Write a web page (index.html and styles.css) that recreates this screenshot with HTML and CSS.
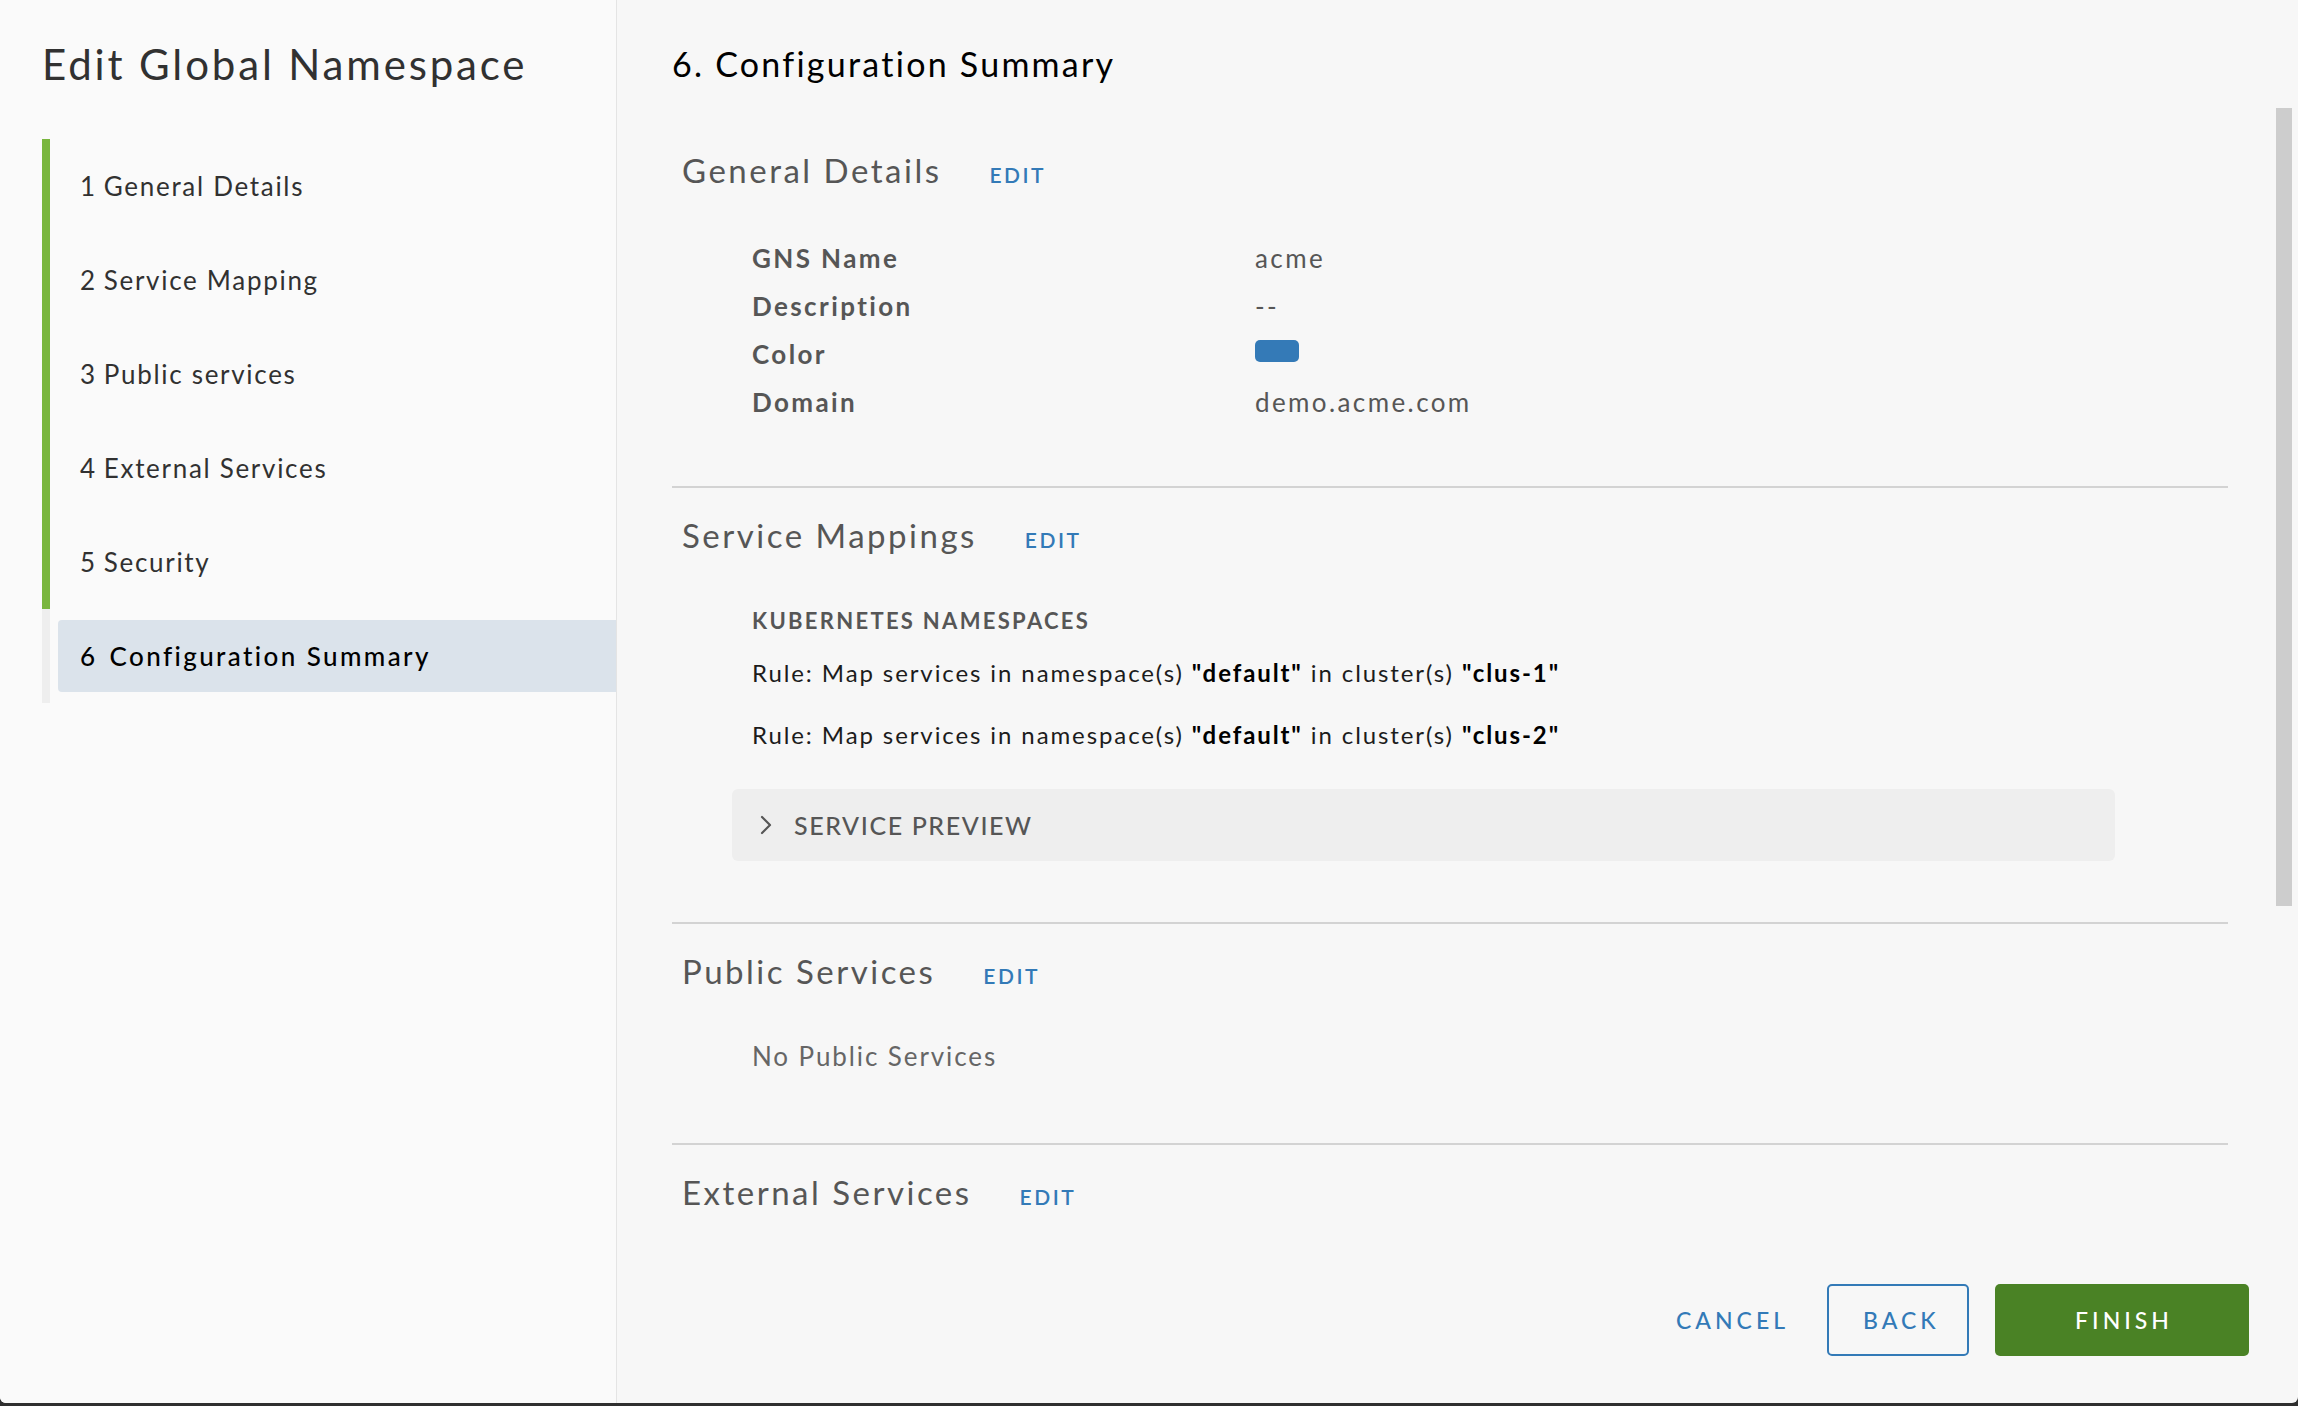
FILE: index.html
```html
<!DOCTYPE html>
<html lang="en">
<head>
<meta charset="utf-8">
<title>Edit Global Namespace</title>
<link rel="stylesheet" href="styles.css">
</head>
<body>
<div class="modal">
  <aside class="sidebar">
    <h1 class="wiz-title">Edit Global Namespace</h1>
    <ol class="steps">
      <li class="step done"><span class="num">1</span>General Details</li>
      <li class="step done"><span class="num">2</span>Service Mapping</li>
      <li class="step done"><span class="num">3</span>Public services</li>
      <li class="step done"><span class="num">4</span>External Services</li>
      <li class="step done"><span class="num">5</span>Security</li>
      <li class="step active"><div class="step-box"><span class="num">6</span>Configuration Summary</div></li>
    </ol>
  </aside>
  <main class="main">
    <div class="scroll">
      <h2 class="page-title">6. Configuration Summary</h2>

      <section class="sec first">
        <div class="sec-head"><h3 class="sec-title">General Details</h3><a class="edit">EDIT</a></div>
        <div class="kv">
          <div class="kv-row"><span class="kv-label">GNS Name</span><span class="kv-value">acme</span></div>
          <div class="kv-row"><span class="kv-label">Description</span><span class="kv-value">--</span></div>
          <div class="kv-row"><span class="kv-label">Color</span><span class="swatch"></span></div>
          <div class="kv-row"><span class="kv-label">Domain</span><span class="kv-value">demo.acme.com</span></div>
        </div>
      </section>

      <section class="sec sm">
        <div class="sec-head"><h3 class="sec-title">Service Mappings</h3><a class="edit">EDIT</a></div>
        <div class="sub-title">KUBERNETES NAMESPACES</div>
        <p class="rule">Rule: Map services in namespace(s) <b>"default"</b> in cluster(s) <b>"clus-1"</b></p>
        <p class="rule">Rule: Map services in namespace(s) <b>"default"</b> in cluster(s) <b>"clus-2"</b></p>
        <div class="preview">
          <svg class="chev" width="14" height="20" viewBox="0 0 14 20"><path d="M3 2 L11 10 L3 18" fill="none" stroke="#565656" stroke-width="2.2" stroke-linecap="round" stroke-linejoin="round"/></svg>
          <span class="preview-text">SERVICE PREVIEW</span>
        </div>
      </section>

      <section class="sec ps">
        <div class="sec-head"><h3 class="sec-title">Public Services</h3><a class="edit">EDIT</a></div>
        <p class="empty">No Public Services</p>
      </section>

      <section class="sec es">
        <div class="sec-head"><h3 class="sec-title">External Services</h3><a class="edit">EDIT</a></div>
      </section>
    </div>
    <div class="thumb"></div>
    <footer class="footer">
      <button class="btn btn-flat">CANCEL</button>
      <button class="btn btn-outline">BACK</button>
      <button class="btn btn-primary">FINISH</button>
    </footer>
  </main>
</div>
</body>
</html>
```

FILE: styles.css
```css
* { box-sizing: border-box; }
html, body { margin: 0; padding: 0; }
body {
  background: #2f2f2f;
  font-family: Lato, "Open Sans", sans-serif;
  width: 2298px;
  height: 1406px;
  overflow: hidden;
}
.modal {
  display: flex;
  height: 1403px;
  background: #f7f7f7;
  border-radius: 0 0 6px 6px;
  overflow: hidden;
}
.sidebar {
  width: 617px;
  flex: none;
  background: #fafafa;
  border-right: 1px solid #e4e4e4;
  padding: 39px 0 0 42px;
}
.wiz-title {
  margin: 0;
  font-size: 42px;
  line-height: 50px;
  font-weight: 400;
  color: #313131;
  letter-spacing: 2.85px;
}
.steps {
  list-style: none;
  margin: 50px 0 0 0;
  padding: 0;
}
.step {
  height: 94px;
  display: flex;
  align-items: center;
  font-size: 26px;
  letter-spacing: 1.7px;
  color: #313131;
  border-left: 8px solid #eeeeee;
}
.step.done {
  border-left-color: #79b63e;
  padding-left: 30px;
}
.num { margin-right: 7px; }
.step.active {
  padding: 11px 0 11px 8px;
  align-items: stretch;
}
.step-box {
  flex: 1;
  display: flex;
  align-items: center;
  background: #dbe3eb;
  border-radius: 4px 0 0 4px;
  padding-left: 22px;
  color: #000;
  font-weight: 500;
  letter-spacing: 2.4px;
}
.step-box .num { margin-right: 12px; }
.main {
  flex: 1;
  position: relative;
  display: flex;
  flex-direction: column;
}
.scroll {
  height: 1250px;
  overflow: hidden;
  padding: 44px 70px 0 55px;
}
.page-title {
  margin: 0;
  font-size: 34px;
  line-height: 40px;
  font-weight: 400;
  letter-spacing: 2.25px;
  color: #000;
}
.sec {
  border-top: 2px solid #d3d3d3;
  padding-top: 27px;
}
.sec.first {
  border-top: 0;
  margin-top: 66px;
  padding-top: 0;
  padding-bottom: 60px;
}
.sec-head {
  display: flex;
  align-items: baseline;
  padding-left: 10px;
  height: 40px;
}
.sec-title {
  margin: 0;
  font-size: 33px;
  line-height: 40px;
  font-weight: 400;
  letter-spacing: 2.5px;
  color: #565656;
}
.edit {
  margin-left: 48px;
  font-size: 21px;
  font-weight: 600;
  letter-spacing: 2.5px;
  color: #337ab7;
}
.kv { margin-top: 44px; padding-left: 80px; }
.kv-row {
  display: flex;
  align-items: flex-start;
  height: 48px;
  font-size: 26px;
  line-height: 48px;
  letter-spacing: 2.4px;
  color: #565656;
}
.kv-label { width: 503px; font-weight: 700; }
.swatch {
  width: 44px;
  height: 22px;
  margin-top: 10px;
  border-radius: 5px;
  background: #347ab7;
}
.sec.sm { padding-bottom: 61px; }
.sub-title {
  margin: 51px 0 0 80px;
  font-size: 22px;
  line-height: 30px;
  font-weight: 700;
  letter-spacing: 2.3px;
  color: #565656;
}
.rule {
  margin: 19px 0 0 80px;
  font-size: 24px;
  line-height: 36px;
  letter-spacing: 1.9px;
  color: #1c1c1c;
}
.rule + .rule { margin-top: 26px; }
.rule b { color: #000; }
.preview {
  margin: 36px 0 0 60px;
  width: 1383px;
  height: 72px;
  background: #eeeeee;
  border-radius: 6px;
  display: flex;
  align-items: center;
  padding-left: 27px;
}
.chev { margin-right: 21px; }
.preview-text {
  font-size: 25px;
  font-weight: 500;
  letter-spacing: 1.6px;
  color: #565656;
}
.sec.ps { padding-bottom: 69px; }
.empty {
  margin: 47px 0 0 80px;
  font-size: 26px;
  line-height: 36px;
  letter-spacing: 1.9px;
  color: #666;
}
.thumb {
  position: absolute;
  right: 6px;
  top: 108px;
  width: 16px;
  height: 798px;
  background: #cdcdcd;
}
.footer {
  display: flex;
  justify-content: flex-end;
  align-items: center;
  padding: 34px 49px 0 0;
}
.btn {
  height: 72px;
  font-family: Lato, "Open Sans", sans-serif;
  font-size: 23px;
  font-weight: 500;
  letter-spacing: 4px;
  border-radius: 5px;
  padding: 0 30px 0 34px;
  cursor: pointer;
}
.btn-flat {
  background: transparent;
  border: 0;
  color: #337ab7;
  margin-right: 8px;
}
.btn-outline {
  background: transparent;
  border: 2px solid #337ab7;
  color: #337ab7;
  width: 142px;
  margin-right: 26px;
}
.btn-primary {
  background: #4a8225;
  border: 0;
  color: #fff;
  width: 254px;
}
```
